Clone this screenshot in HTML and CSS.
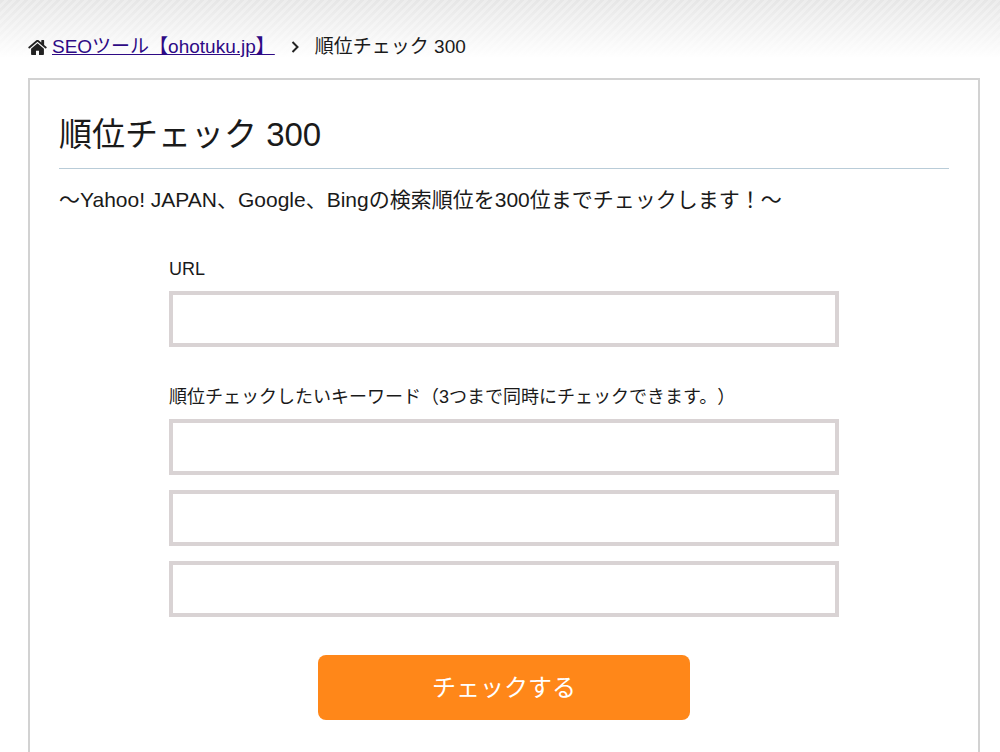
FILE: index.html
```html
<!DOCTYPE html>
<html lang="ja">
  <head>
    <meta charset="UTF-8" />
    <meta name="viewport" content="width=device-width, initial-scale=1.0" />
    <title>順位チェック 300</title>
    <link rel="stylesheet" href="styles.css">
  </head>

  <body>
    <nav class="breadcrumb">
      <svg class="icon-home" viewBox="0 0 20 18" aria-hidden="true">
        <path d="M10 4.600 3.200 10.300v5.900c0 .5.3.8.8.8h4.400v-4.500h3.200V17H16c.5 0 .8-.3.8-.8v-5.900z" />
        <path d="M19.600 8.600 17 6.400V1.500c0-.3-.2-.5-.5-.5h-2c-.3 0-.5.2-.5.500V3.800L11.200 1.400c-.7-.6-1.700-.6-2.400 0L.4 8.600c-.2.2-.2.400-.1.600l.7.800c.1.200.400.200.6.100L10 3l8.400 7.100c.2.100.500.100.6-.1l.7-.8c.1-.2.1-.4-.1-.6z" />
      </svg>
      <a href="/">SEOツール【ohotuku.jp】</a>
      <svg class="icon-arrow" viewBox="0 0 8 12" aria-hidden="true">
        <path d="M1.500 1 6.500 6 1.500 11" />
      </svg>
      <span>順位チェック 300</span>
    </nav>

    <main class="content">
      <h1 class="title">順位チェック 300</h1>
      <p class="lead">〜Yahoo! JAPAN、Google、Bingの検索順位を300位までチェックします！〜</p>

      <form class="check-form">
        <div class="field">
          <label for="url">URL</label>
          <input type="text" id="url" name="url" />
        </div>
        <div class="field">
          <label for="keyword1" id="keyword-label">順位チェックしたいキーワード（3つまで同時にチェックできます。）</label>
          <input type="text" id="keyword1" name="keyword1" />
          <input type="text" name="keyword2" aria-labelledby="keyword-label" />
          <input type="text" name="keyword3" aria-labelledby="keyword-label" />
        </div>
        <button class="submit" type="submit">チェックする</button>
      </form>
    </main>
  </body>
</html>
```

FILE: styles.css
```css
*,
*:before,
*:after {
  box-sizing: border-box;
}

body {
  margin: 0;
  min-height: 100vh;
  display: flex;
  flex-direction: column;
  padding: 33px 20px 0 28px;
  color: #1a1a1a;
  font-family: "Liberation Sans", "Noto Sans CJK JP", sans-serif;
  font-size: 18px;
  text-spacing-trim: space-all;
  /* diagonal stripes that fade into white */
  background-color: #fff;
  background-image:
    linear-gradient(to bottom, rgba(255, 255, 255, 0), #fff 58px),
    linear-gradient(135deg, #e6e6e6 25%, #ededed 25%, #ededed 50%, #e6e6e6 50%, #e6e6e6 75%, #ededed 75%);
  background-size: auto, 8px 8px;
}

/* breadcrumb */
.breadcrumb {
  display: flex;
  align-items: center;
  margin-bottom: 17px;
  font-size: 19px;
  line-height: 28px;
}

.breadcrumb a {
  color: #2e0a85;
}

.icon-home {
  width: 19px;
  height: 17px;
  margin-right: 5px;
  fill: #222;
}

.icon-arrow {
  width: 8px;
  height: 12px;
  margin: 0 16px;
  fill: none;
  stroke: #222;
  stroke-width: 2;
}

/* main box */
.content {
  flex-grow: 1;
  padding: 29px;
  border: 2px solid #d2d2d2;
  border-bottom: 0;
  background-color: #fff;
}

.title {
  margin: 0;
  padding-bottom: 7px;
  border-bottom: 1px solid #b9ccd8;
  font-size: 33px;
  font-weight: normal;
  line-height: 52px;
}

.lead {
  margin: 15px 0 41px;
  font-size: 21px;
  line-height: 32px;
}

.check-form {
  max-width: 670px;
  margin: 0 auto;
}

.field {
  display: flex;
  flex-direction: column;
  gap: 15px;
  margin-bottom: 38px;
}

.field label {
  margin-bottom: -5px;
  line-height: 24px;
}

.field input {
  width: 100%;
  height: 56px;
  padding: 8px 12px;
  border: 4px solid #d9d3d4;
  background-color: #fff;
  font: inherit;
}

.submit {
  display: block;
  width: 372px;
  max-width: 100%;
  margin: 0 auto;
  padding: 14px;
  border: 0;
  border-radius: 8px;
  background-color: #ff8719;
  color: #fff;
  font-family: inherit;
  font-size: 24px;
  line-height: 37px;
  cursor: pointer;
}
```
